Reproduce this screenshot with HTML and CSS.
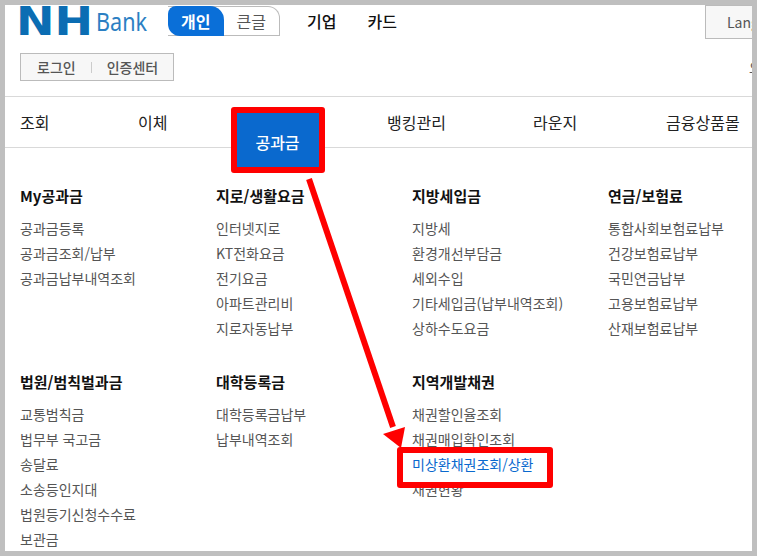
FILE: index.html
```html
<!DOCTYPE html>
<html lang="ko">
<head>
    <meta charset="UTF-8">
    <title>NH Bank</title>
    <link rel="stylesheet" href="styles.css">
</head>
<body>
<div class="frame">

    <!-- Header -->
    <header class="top">
        <div class="top-row">
            <div class="logo"><span class="logo-nh">NH</span><span class="logo-bank">Bank</span></div>
            <div class="tabs">
                <a class="tab tab-on" href="#">개인</a>
                <a class="tab" href="#">큰글</a>
            </div>
            <nav class="top-nav">
                <a href="#">기업</a>
                <a href="#">카드</a>
            </nav>
            <a class="lang" href="#">Language</a>
        </div>
        <div class="login-row">
            <div class="login-box">
                <a href="#">로그인</a>
                <span class="login-sep"></span>
                <a href="#">인증센터</a>
            </div>
            <span class="login-note">오</span>
        </div>
    </header>

    <!-- Main menu -->
    <nav class="gnb">
        <a href="#">조회</a>
        <a href="#">이체</a>
        <a class="gnb-on" href="#">공과금</a>
        <a href="#">뱅킹관리</a>
        <a href="#">라운지</a>
        <a href="#">금융상품몰</a>
    </nav>

    <!-- Sub menu -->
    <div class="menu">
        <div class="group">
            <h3>My공과금</h3>
            <a href="#">공과금등록</a>
            <a href="#">공과금조회/납부</a>
            <a href="#">공과금납부내역조회</a>
        </div>
        <div class="group">
            <h3>지로/생활요금</h3>
            <a href="#">인터넷지로</a>
            <a href="#">KT전화요금</a>
            <a href="#">전기요금</a>
            <a href="#">아파트관리비</a>
            <a href="#">지로자동납부</a>
        </div>
        <div class="group">
            <h3>지방세입금</h3>
            <a href="#">지방세</a>
            <a href="#">환경개선부담금</a>
            <a href="#">세외수입</a>
            <a href="#">기타세입금(납부내역조회)</a>
            <a href="#">상하수도요금</a>
        </div>
        <div class="group">
            <h3>연금/보험료</h3>
            <a href="#">통합사회보험료납부</a>
            <a href="#">건강보험료납부</a>
            <a href="#">국민연금납부</a>
            <a href="#">고용보험료납부</a>
            <a href="#">산재보험료납부</a>
        </div>
        <div class="group">
            <h3>법원/범칙벌과금</h3>
            <a href="#">교통범칙금</a>
            <a href="#">법무부 국고금</a>
            <a href="#">송달료</a>
            <a href="#">소송등인지대</a>
            <a href="#">법원등기신청수수료</a>
            <a href="#">보관금</a>
        </div>
        <div class="group">
            <h3>대학등록금</h3>
            <a href="#">대학등록금납부</a>
            <a href="#">납부내역조회</a>
        </div>
        <div class="group">
            <h3>지역개발채권</h3>
            <a href="#">채권할인율조회</a>
            <a href="#">채권매입확인조회</a>
            <a class="link-on" href="#">미상환채권조회/상환</a>
            <a href="#">채권현황</a>
        </div>
    </div>

    <!-- Annotations drawn over the screenshot -->
    <svg class="arrow" width="757" height="556" viewBox="0 0 757 556">
        <line x1="309" y1="179" x2="393" y2="427" stroke="#ff0000" stroke-width="6"/>
        <polygon points="383,434 405,427 401,448" fill="#ff0000"/>
    </svg>
    <div class="mark mark-tab"></div>
    <div class="mark mark-link"></div>
</div>
</body>
</html>
```

FILE: styles.css
```css
* {
    box-sizing: border-box;
}

body {
    margin: 0;
    font-family: "Noto Sans CJK KR", "Noto Sans", sans-serif;
    background: #fff;
}

a {
    color: inherit;
    text-decoration: none;
}

.frame {
    position: relative;
    width: 757px;
    height: 556px;
    border: 5px solid #bfbfbf;
    overflow: hidden;
    background: #fff;
}

/* Header */
.top {
    height: 92px;
    padding-left: 15px;
    border-bottom: 1px solid #d9d9d9;
}

.top-row {
    display: flex;
    align-items: flex-start;
    height: 48px;
}

.logo {
    display: flex;
    align-items: center;
    width: 148px;
    height: 31px;
    margin-top: 1px;
}

.logo-nh {
    font-family: "DejaVu Sans", sans-serif;
    font-weight: 700;
    font-size: 39px;
    line-height: 31px;
    color: #0b6db3;
    width: 80px;
    margin-left: -4px;
    transform: scaleX(1.18);
    transform-origin: left center;
}

.logo-bank {
    font-family: "Noto Sans", sans-serif;
    font-size: 26px;
    line-height: 31px;
    color: #2b7fc3;
    transform: scaleX(0.83);
    transform-origin: left center;
}

.tabs {
    display: flex;
    width: 112px;
    height: 30px;
    margin-top: 1px;
    border: 1px solid #bbb;
    border-left: 0;
    border-radius: 0 12px 0 0;
}

.tab {
    flex: 1;
    text-align: center;
    font-size: 16px;
    line-height: 28px;
    color: #555;
}

.tab-on {
    margin: -1px 0 -1px 0;
    line-height: 30px;
    font-weight: 700;
    color: #fff;
    background: #0a6fd8;
    border-radius: 8px 14px 0 12px;
}

.top-nav {
    display: flex;
    gap: 31px;
    margin-left: 27px;
    font-size: 16px;
    line-height: 32px;
    font-weight: 500;
    color: #111;
}

.lang {
    width: 57px;
    height: 34px;
    margin-left: auto;
    margin-right: -10px;
    padding-left: 21px;
    border: 1px solid #bbb;
    background: #f7f7f7;
    font-size: 14px;
    line-height: 32px;
    color: #555;
    white-space: nowrap;
    overflow: hidden;
}

.login-row {
    display: flex;
    align-items: center;
    justify-content: space-between;
}

.login-box {
    display: flex;
    align-items: center;
    width: 154px;
    height: 28px;
    padding-left: 16px;
    border: 1px solid #bbb;
    background: #f7f7f7;
    font-size: 14px;
    font-weight: 500;
    color: #555;
}

.login-sep {
    width: 1px;
    height: 11px;
    margin: 0 15px;
    background: #ccc;
}

.login-note {
    width: 13px;
    margin-right: -10px;
    font-size: 14px;
    color: #555;
}

/* Main menu */
.gnb {
    display: grid;
    grid-template-columns: 118px 117px 132px 146px 133px auto;
    height: 51px;
    padding-left: 15px;
    border-bottom: 1px solid #d9d9d9;
    font-size: 16px;
    line-height: 50px;
    color: #222;
    white-space: nowrap;
}

.gnb-on {
    position: relative;
    z-index: 1;
    width: 83px;
    height: 54px;
    margin: 16px 0 0 -19px;
    background: #0a69ce;
    color: #fff;
    font-size: 16px;
    font-weight: 500;
    line-height: 58px;
    text-align: center;
}

/* Sub menu */
.menu {
    display: grid;
    grid-template-columns: repeat(4, 196px);
    grid-auto-rows: 186px;
    padding: 36px 0 0 15px;
}

.group h3 {
    margin: 0 0 8px;
    font-size: 15px;
    line-height: 24px;
    font-weight: 700;
    color: #111;
}

.group a {
    display: block;
    font-size: 14px;
    line-height: 25px;
    color: #555;
    white-space: nowrap;
}

.group .link-on {
    color: #0a69ce;
}

/* Annotations */
.arrow {
    position: absolute;
    left: -5px;
    top: -5px;
    z-index: 2;
}

.mark {
    position: absolute;
    z-index: 3;
    border: 6px solid #ff0000;
    border-radius: 3px;
}

.mark-tab {
    left: 226px;
    top: 102px;
    width: 94px;
    height: 66px;
}

.mark-link {
    left: 392px;
    top: 442px;
    width: 156px;
    height: 41px;
}
```
